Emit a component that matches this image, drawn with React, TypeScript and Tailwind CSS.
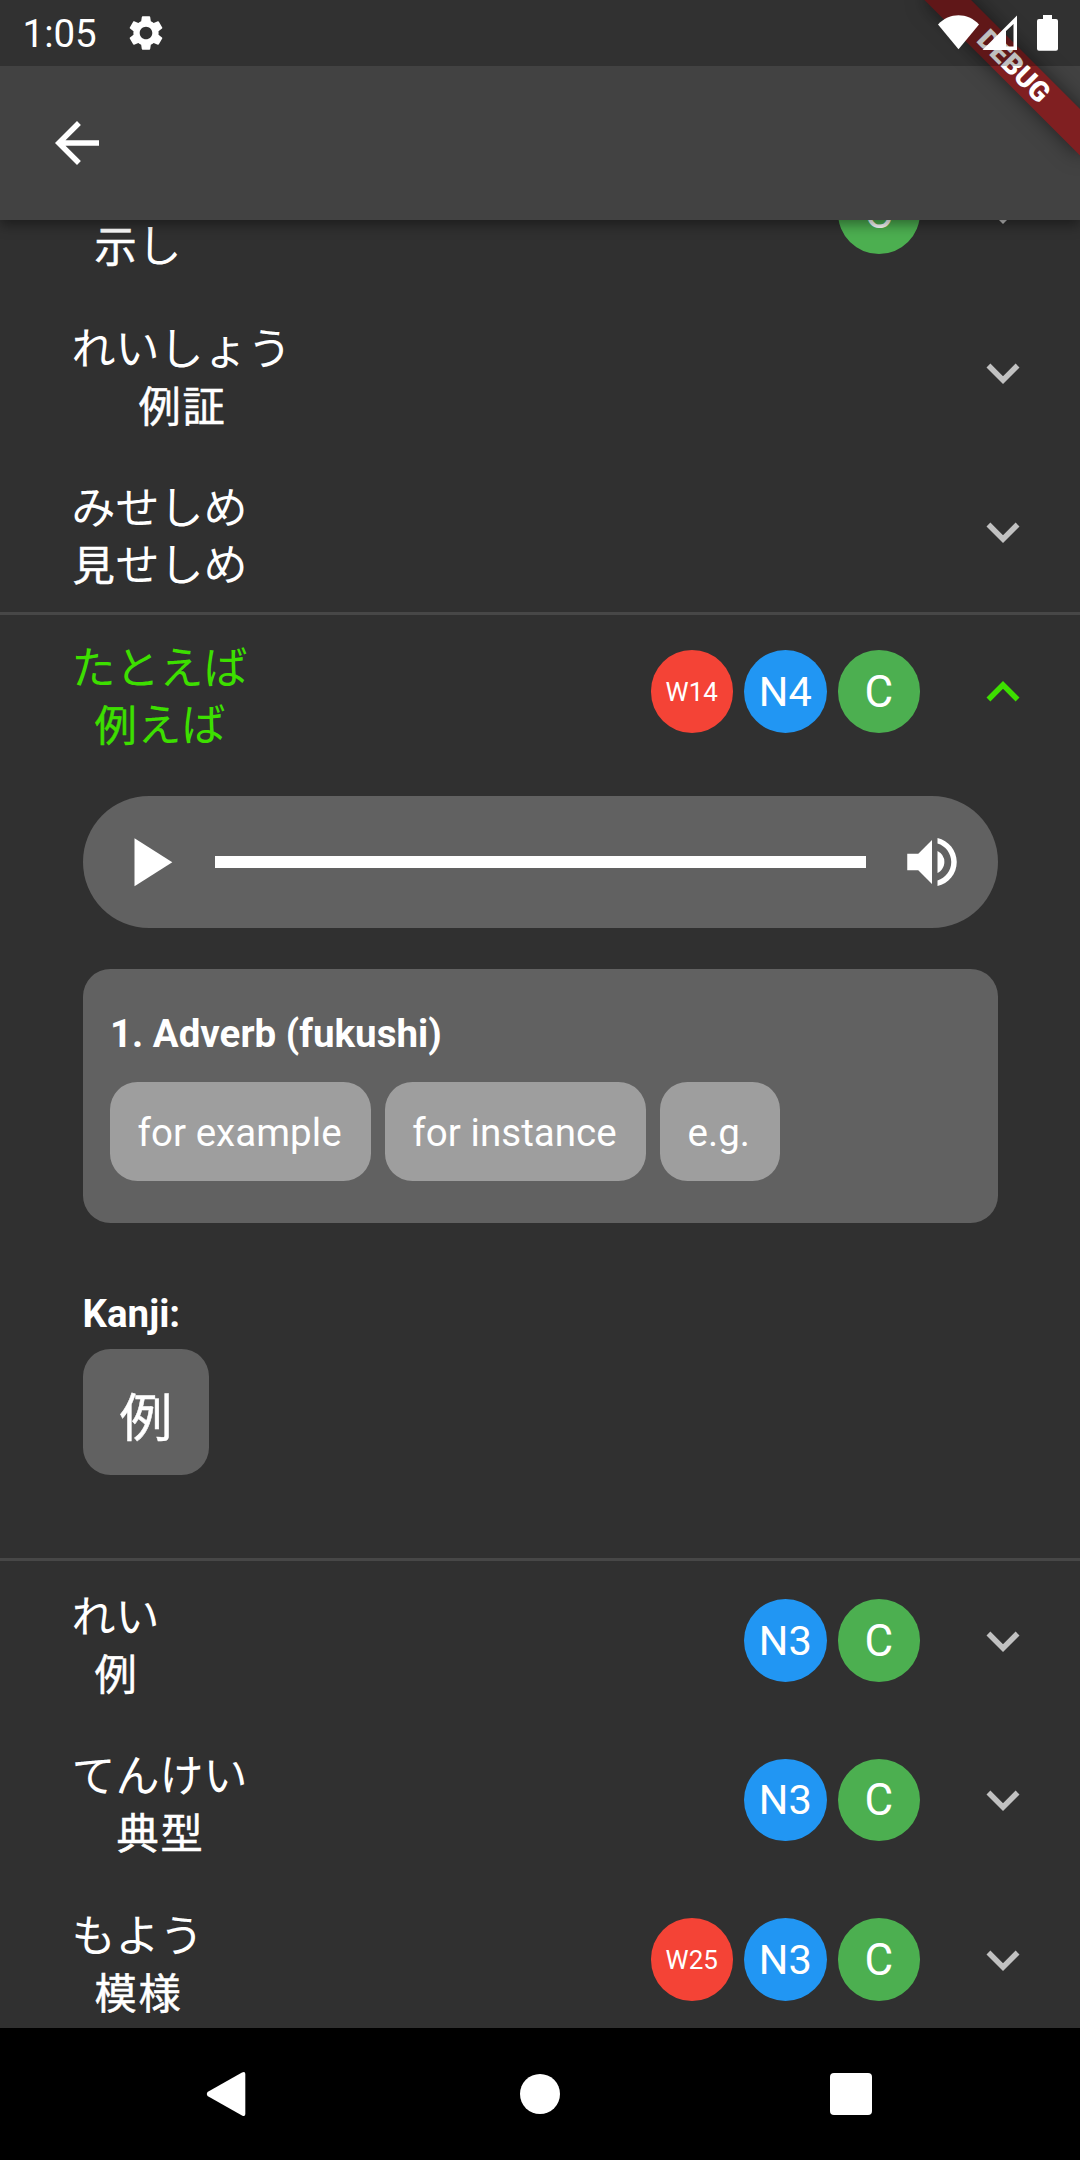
import React from "react";
import { MdArrowBack, MdExpandLess, MdExpandMore, MdPlayArrow, MdSettings, MdVolumeUp } from "react-icons/md";

type Badge = { label: string; kind: "wani" | "jlpt" | "common" };
type Entry = { kana: string; kanji: string; okurigana?: string; badges: Badge[] };

const badgeStyles: Record<Badge["kind"], string> = {
  wani: "bg-[#f44336] text-[26px]",
  jlpt: "bg-[#2196f3] text-[41.5px]",
  common: "bg-[#4caf50] text-[44px]",
};

const C: Badge = { label: "C", kind: "common" };
const jlpt = (n: number): Badge => ({ label: `N${n}`, kind: "jlpt" });
const wani = (n: number): Badge => ({ label: `W${n}`, kind: "wani" });

const before: Entry[] = [
  { kana: "しめし", kanji: "示", okurigana: "し", badges: [C] },
  { kana: "れいしょう", kanji: "例証", badges: [] },
  { kana: "みせしめ", kanji: "見", okurigana: "せしめ", badges: [] },
];
const current: Entry = { kana: "たとえば", kanji: "例", okurigana: "えば", badges: [wani(14), jlpt(4), C] };
const after: Entry[] = [
  { kana: "れい", kanji: "例", badges: [jlpt(3), C] },
  { kana: "てんけい", kanji: "典型", badges: [jlpt(3), C] },
  { kana: "もよう", kanji: "模様", badges: [wani(25), jlpt(3), C] },
];

// Kanji are set slightly smaller and heavier than kana, on the same em grid.
function Kanji({ children }: { children: string }) {
  return (
    <span className="ml-[0.025em] -mr-[0.025em] text-[0.96em] tracking-[0.0417em] [-webkit-text-stroke:0.5px_currentColor]">
      {children}
    </span>
  );
}

function Row({ entry, open = false }: { entry: Entry; open?: boolean }) {
  return (
    <div className="flex h-[159.5px] items-center pl-[71.5px] pr-[44px]">
      <div
        className={`pt-[4px] text-center font-['Noto_Sans_CJK_JP',sans-serif] text-[44px] leading-[58px] whitespace-nowrap ${
          open ? "text-[#3ddf00]" : "text-white"
        }`}
      >
        <div>{entry.kana}</div>
        <div className="h-[58px] leading-[57px]">
          <Kanji>{entry.kanji}</Kanji>
          {entry.okurigana}
        </div>
      </div>
      <div className="ml-auto mr-[50px] flex gap-[11px]">
        {entry.badges.map((b) => (
          <span
            key={b.label}
            className={`flex size-[82.5px] items-center justify-center rounded-full leading-none text-white ${badgeStyles[b.kind]}`}
          >
            {b.label}
          </span>
        ))}
      </div>
      {open ? (
        <MdExpandLess className="size-[66px] text-[#3ddf00]" />
      ) : (
        <MdExpandMore className="size-[66px] text-[#c1c1c1]" />
      )}
    </div>
  );
}

function Player() {
  return (
    <div className="mt-[24.75px] flex h-[132px] items-center rounded-full bg-[#616161] pl-[24.75px] pr-[33px] text-white">
      <MdPlayArrow className="size-[82.5px] shrink-0" />
      <div className="ml-[24.75px] mr-[32.5px] h-[11.5px] flex-1 bg-white" />
      <MdVolumeUp className="size-[66px] shrink-0" />
    </div>
  );
}

function Details() {
  return (
    <div className="pl-[82.5px] pr-[82.5px] text-[38.5px] leading-[45px] text-white">
      <Player />
      <div className="mt-[41.25px] h-[253.5px] rounded-[27.5px] bg-[#616161] px-[27.5px] pt-[41.5px]">
        <div className="font-bold">1. Adverb (fukushi)</div>
        <div className="mt-[26.25px] flex gap-[13.75px]">
          {["for example", "for instance", "e.g."].map((t) => (
            <span
              key={t}
              className="flex h-[99px] items-center rounded-[27.5px] bg-[#9e9e9e] pt-px pl-[27.5px] pr-[29.5px] tracking-[0.05px]"
            >
              {t}
            </span>
          ))}
        </div>
      </div>
      <div className="mt-[68px] font-bold">Kanji:</div>
      <div className="mt-[12.75px] flex size-[126.5px] items-center justify-center rounded-[27.5px] bg-[#616161] pt-[5px] font-['Noto_Sans_CJK_JP',sans-serif] text-[55px] leading-none">
        <Kanji>例</Kanji>
      </div>
    </div>
  );
}

function StatusBar() {
  return (
    <div className="absolute inset-x-0 top-0 z-30 flex h-[66px] items-center bg-black/25 pl-[22.5px] pr-[22px] text-white">
      <span className="pt-[2px] text-[38.5px] leading-none">1:05</span>
      <MdSettings className="ml-[28.5px] size-[42px]" />
      <svg className="ml-auto h-[66px] w-[120px]" viewBox="938 0 120 66" fill="currentColor">
        <path d="M938 24.5C949.500 12.300 967.500 12.300 979 24.500L958.500 49.300Z" />
        <path fillRule="evenodd" d="M982.500 50L1017 15.500V50ZM1006 31V46.500H1013.500V24Z" />
        <path d="M1043 15H1052V19H1056Q1058 19 1058 21V48.700Q1058 50.700 1056 50.700H1039Q1037 50.700 1037 48.700V21Q1037 19 1039 19H1043Z" />
      </svg>
    </div>
  );
}

function DebugBanner() {
  return (
    <div className="absolute -right-[110px] top-[77px] z-20 flex h-[33px] w-[220px] origin-[110px_-77px] rotate-45 items-center justify-center bg-[#801f21] text-[28px] font-black leading-none text-white shadow-[0_0_20px_rgba(0,0,0,0.5)]">
      DEBUG
    </div>
  );
}

function NavBar() {
  return (
    <div className="flex h-[132px] shrink-0 items-center bg-black pl-[206px] text-white">
      <svg className="h-[46px] w-[40px]" viewBox="0 0 40 46" fill="currentColor">
        <path d="M1.500 21L36 1.500Q39.300 0 39.300 3V43Q39.300 46 36 44.500L1.500 25Q0 23 1.500 21Z" />
      </svg>
      <div className="ml-[273.75px] size-[40.5px] rounded-full bg-white" />
      <div className="ml-[269.75px] size-[41.5px] rounded-[4px] bg-white" />
    </div>
  );
}

export default function App() {
  return (
    <div className="relative flex h-[2160px] w-[1080px] flex-col overflow-hidden bg-[#303030] font-[Roboto,sans-serif]">
      <header className="relative z-10 flex h-[220px] shrink-0 items-center bg-[#424242] pl-[44px] pt-[66px] shadow-[0_5px_12px_rgba(0,0,0,0.4)]">
        <MdArrowBack className="size-[66px] text-white" />
      </header>
      <main className="min-h-0 flex-1 overflow-hidden">
        <div className="-mt-[86.75px]">
          {before.map((e) => (
            <Row key={e.kana} entry={e} />
          ))}
          <section className="h-[949px] shadow-[inset_0_3px_0_#474747,inset_0_-3px_0_#474747]">
            <Row entry={current} open />
            <Details />
          </section>
          {after.map((e) => (
            <Row key={e.kana} entry={e} />
          ))}
        </div>
      </main>
      <NavBar />
      <DebugBanner />
      <StatusBar />
    </div>
  );
}
